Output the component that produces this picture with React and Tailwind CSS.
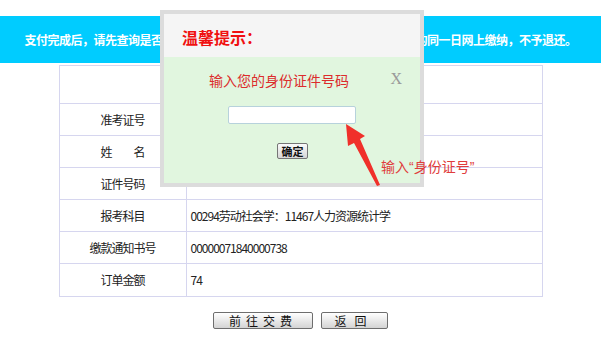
import React from 'react';

const cjk = { fontFamily: '"Noto Sans CJK SC", "Noto Sans", sans-serif' };
const mixed = { fontFamily: '"Liberation Sans", "Noto Sans CJK SC", sans-serif' };

const rows = [
  { label: '准考证号', value: '' },
  { label: '姓　　名', value: '' },
  { label: '证件号码', value: '' },
  { label: '报考科目', value: '00294劳动社会学：11467人力资源统计学' },
  { label: '缴款通知书号', value: '00000071840000738' },
  { label: '订单金额', value: '74' },
];

function PayTable() {
  return (
    <table className="mx-auto mt-[2px] w-[484px] border-collapse border border-[#d6d6ef] text-[12px] tracking-[-1px] text-[#222]">
      <tbody>
        <tr className="h-[38px]">
          <td colSpan={2} className="border border-[#d6d6ef]"></td>
        </tr>
        {rows.map((r, i) => (
          <tr key={r.label} className={i === rows.length - 1 ? 'h-[33px]' : 'h-[32px]'}>
            <td className="w-[127px] border border-[#d6d6ef] text-center">{r.label}</td>
            <td className="border border-[#d6d6ef] pl-[4px]">{r.value}</td>
          </tr>
        ))}
      </tbody>
    </table>
  );
}

function TipDialog() {
  return (
    <div className="absolute left-[160px] top-[10px] flex h-[177px] w-[264px] flex-col border-4 border-[#dcdcdc]">
      {/* header */}
      <div className="flex h-[43px] items-center bg-[#f5f5f5] pl-[18px] pt-[2px]">
        <span className="text-[16px] font-bold text-[#f01010]">温馨提示：</span>
      </div>
      {/* body */}
      <div className="flex flex-1 flex-col bg-[#e1f6df]">
        <div className="flex items-start justify-between pl-[45px] pr-[18px] pt-[13px]">
          <span className="text-[14px] text-[#dc2c2c]">输入您的身份证件号码</span>
          <span className="mt-[-1px] text-[16px] leading-[20px] text-[#9a9a9a]" style={{ fontFamily: '"Liberation Serif", serif' }}>X</span>
        </div>
        <div className="mt-[15px] flex justify-center">
          <input className="h-[18px] w-[128px] rounded-[2px] border border-[#b7d2dc] bg-white outline-none" />
        </div>
        <div className="mt-[19px] flex justify-center pl-[1px]">
          <button className="flex h-[16px] w-[31px] items-center justify-center rounded-[2px] border border-[#767676] bg-gradient-to-b from-[#fbfbfb] to-[#d6d6d6] text-[11px] leading-none font-bold text-[#111]">
            确定
          </button>
        </div>
      </div>
    </div>
  );
}

export default function App() {
  return (
    <div className="relative h-[340px] w-[601px] overflow-hidden bg-white" style={cjk}>
      <div className="mt-[16px] flex h-[47px] items-center justify-center bg-[#00ccff] pt-[1px]">
        <span className="text-[12px] font-bold tracking-[-0.5px] text-white">
          支付完成后，请先查询是否缴费成功，切勿重复缴费。考试费用须在报名期间的同一日网上缴纳，不予退还。
        </span>
      </div>

      <PayTable />

      <div className="mt-[15px] flex justify-center gap-[8px]">
        <button className="h-[17px] w-[100px] rounded-[2px] border border-[#6e6e6e] bg-gradient-to-b from-white to-[#d4d4d4] text-[12px] leading-none tracking-[5px] text-[#111]">
          前往交费
        </button>
        <button className="h-[17px] w-[67px] rounded-[2px] border border-[#6e6e6e] bg-gradient-to-b from-white to-[#d4d4d4] text-[12px] leading-none tracking-[8px] text-[#111]">
          返回
        </button>
      </div>

      <TipDialog />

      {/* red arrow pointing at the input */}
      <svg className="pointer-events-none absolute left-0 top-0" width="601" height="340">
        <polygon points="346,124 365,136 360,139 380,185 377,186 354,143 348,146" fill="#f0302a" />
      </svg>
      <span className="absolute left-[381px] top-[157px] text-[14px] text-[#e03c3c]" style={mixed}>
        输入“身份证号”
      </span>
    </div>
  );
}
